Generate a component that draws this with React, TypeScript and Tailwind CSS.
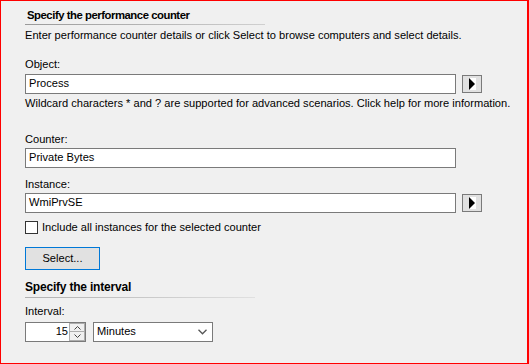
import React from "react";

function ArrowBtn() {
  return (
    <div className="ml-[6px] mt-px flex h-[18px] w-[20px] items-center justify-center border border-[#7a7a7a] bg-[#e1e1e1]">
      <div className="flex h-[12px] w-[7px] items-center bg-white">
        <svg width="6" height="12" viewBox="0 0 6 12">
          <polygon points="0,0 6,6 0,12" fill="#000" />
        </svg>
      </div>
    </div>
  );
}

function TextBox({ value }: { value: string }) {
  return (
    <div className="flex h-[20px] w-[431px] items-center border border-[#7a7a7a] bg-white pl-[3px] leading-none">
      {value}
    </div>
  );
}

export default function App() {
  return (
    <div
      className="h-[364px] w-[529px] whitespace-nowrap border border-r-2 border-[#ff0000] bg-[#f0f0f0] pl-[24px] pt-[7px] text-[11.1px] text-black"
      style={{ fontFamily: '"Liberation Sans", Arial, sans-serif' }}
    >
      <div className="h-[15px] pl-[2px] text-[11.3px] font-bold leading-[15px] tracking-[-0.45px]">
        Specify the performance counter
      </div>
      <div className="mt-px h-px w-[240px] bg-gradient-to-r from-[#9a9a9a] to-[#d0d0d0]" />
      <div className="mt-[3px] h-[15px] leading-[15px]">
        Enter performance counter details or click Select to browse computers and select details.
      </div>

      <div className="mt-[14px] h-[15px] leading-[15px]">Object:</div>
      <div className="mt-[2px] flex items-start">
        <TextBox value="Process" />
        <ArrowBtn />
      </div>
      <div className="mt-[2px] h-[15px] leading-[15px]">
        Wildcard characters * and ? are supported for advanced scenarios. Click help for more information.
      </div>

      <div className="mt-[21px] h-[15px] leading-[15px]">Counter:</div>
      <div className="mt-px flex items-start">
        <TextBox value="Private Bytes" />
      </div>

      <div className="mt-[9px] h-[15px] leading-[15px]">Instance:</div>
      <div className="mt-px flex items-start">
        <TextBox value="WmiPrvSE" />
        <ArrowBtn />
      </div>

      <div className="mt-[8px] flex h-[13px] items-center">
        <div className="h-[13px] w-[13px] border border-[#333] bg-white" />
        <span className="ml-[4px] leading-none">Include all instances for the selected counter</span>
      </div>

      <div className="mt-[13px] flex h-[23px] w-[75px] items-center justify-center border border-[#0078d7] bg-[#e1e1e1] leading-none">
        Select...
      </div>

      <div className="mt-[10px] h-[15px] text-[12px] font-bold leading-[15px] tracking-[-0.2px]">
        Specify the interval
      </div>
      <div className="mt-[2px] h-px w-[230px] bg-gradient-to-r from-[#b0b0b0] to-[#e0e0e0]" />

      <div className="mt-[6px] h-[15px] leading-[15px]">Interval:</div>
      <div className="mt-[3px] flex items-start">
        <div className="flex h-[20px] w-[61px] border border-[#7a7a7a] bg-white">
          <div className="flex flex-1 items-center justify-end pr-[1px] leading-none">15</div>
          <div className="flex w-[16px] flex-col bg-[#e6e6e6]">
            <div className="flex h-[9px] items-center justify-center border border-[#adadad] bg-[#f0f0f0]">
              <svg width="7" height="4" viewBox="0 0 7 4">
                <polyline points="0.5,3.5 3.5,0.5 6.5,3.5" fill="none" stroke="#444" strokeWidth="1" />
              </svg>
            </div>
            <div className="flex h-[9px] items-center justify-center border border-t-0 border-[#adadad] bg-[#f0f0f0]">
              <svg width="7" height="4" viewBox="0 0 7 4">
                <polyline points="0.5,0.5 3.5,3.5 6.5,0.5" fill="none" stroke="#444" strokeWidth="1" />
              </svg>
            </div>
          </div>
        </div>
        <div className="ml-[7px] flex h-[20px] w-[120px] items-center justify-between border border-[#7a7a7a] bg-white pl-[3px] pr-[5px] leading-none">
          <span>Minutes</span>
          <svg width="9" height="6" viewBox="0 0 9 6">
            <polyline points="0.5,0.8 4.5,4.8 8.5,0.8" fill="none" stroke="#555" strokeWidth="1.3" />
          </svg>
        </div>
      </div>
    </div>
  );
}
